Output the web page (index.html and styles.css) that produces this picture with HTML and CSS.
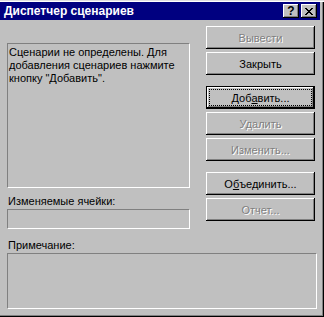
FILE: index.html
```html
<!DOCTYPE html>
<html>
<head>
    <title>Диспетчер сценариев</title>
    <link rel="stylesheet" href="styles.css">
</head>
<body>
    <div class="window">
        <div class="titlebar">
            <span class="title">Диспетчер сценариев</span>
            <div class="title-buttons">
                <span class="tbtn help">?</span>
                <span class="tbtn close">
                    <svg width="8" height="7" viewBox="0 0 8 7">
                        <path d="M0 0h2v1h1v1h2v-1h1v-1h2v1h-1v1h-1v1h-1v1h1v1h1v1h1v1h-2v-1h-1v-1h-2v1h-1v1h-2v-1h1v-1h1v-1h1v-1h-1v-1h-1v-1h-1z" fill="#000"/>
                    </svg>
                </span>
            </div>
        </div>

        <div class="content">
            <div class="top">
                <div class="left">
                    <div class="listbox">Сценарии не определены. Для добавления сценариев нажмите кнопку "Добавить".</div>
                    <div class="label">Изменяемые ячейки:</div>
                    <div class="field"></div>
                </div>
                <div class="buttons">
                    <div class="btn disabled">Вывести</div>
                    <div class="btn">Закрыть</div>
                    <div class="btn focused group"><span class="focus">Доб<u>а</u>вить...</span></div>
                    <div class="btn disabled">Удалить</div>
                    <div class="btn disabled">Изменить...</div>
                    <div class="btn group">О<u>б</u>ъединить...</div>
                    <div class="btn disabled">Отчет...</div>
                </div>
            </div>
            <div class="label note-label">Примечание:</div>
            <div class="field note"></div>
        </div>
    </div>
</body>
</html>
```

FILE: styles.css
```css
body {
    margin: 0;
    background: #c0c0c0;
    font-family: "Liberation Sans", Arial, sans-serif;
    font-size: 11px;
    color: #000;
}
.window {
    width: 324px;
    height: 317px;
    box-sizing: border-box;
    padding: 2px 4px 0 0;
    background: #c0c0c0;
    box-shadow: inset 0 1px #dfdfdf, inset 0 2px #fff, inset -1px -1px #000, inset -2px -2px #808080;
}
.titlebar {
    height: 18px;
    background: #000080;
    display: flex;
    align-items: center;
    justify-content: space-between;
    padding: 0 3px 0 4px;
}
.title {
    color: #fff;
    font-weight: bold;
    font-size: 12px;
}
.title-buttons {
    display: flex;
    gap: 2px;
}
.tbtn {
    width: 16px;
    height: 14px;
    box-sizing: border-box;
    background: #c0c0c0;
    box-shadow: inset -1px -1px #000, inset 1px 1px #fff, inset -2px -2px #808080;
    display: flex;
    align-items: center;
    justify-content: center;
    font-weight: bold;
    font-size: 12px;
    line-height: 14px;
}
.content {
    padding-left: 7px;
}
.top {
    display: flex;
}
.left {
    width: 183px;
    padding-top: 23px;
}
.listbox {
    height: 145px;
    box-sizing: border-box;
    border-top: 1px solid #808080;
    border-left: 1px solid #808080;
    border-right: 1px solid #fff;
    border-bottom: 1px solid #fff;
    padding: 2px 1px;
    line-height: 13px;
}
.label {
    margin-top: 7px;
    line-height: 13px;
    padding-left: 1px;
}
.field {
    height: 20px;
    margin-top: 1px;
    box-sizing: border-box;
    border-top: 1px solid #808080;
    border-left: 1px solid #808080;
    border-right: 1px solid #fff;
    border-bottom: 1px solid #fff;
}
.buttons {
    margin-left: 16px;
    padding-top: 6px;
    width: 109px;
    display: flex;
    flex-direction: column;
    gap: 3px;
}
.btn {
    height: 23px;
    box-sizing: border-box;
    display: flex;
    align-items: center;
    justify-content: center;
    box-shadow: inset -1px -1px #000, inset 1px 1px #fff, inset -2px -2px #808080;
}
.btn.group {
    margin-top: 8px;
}
.btn.disabled {
    color: #808080;
    text-shadow: 1px 1px #fff;
}
.btn.focused {
    border: 1px solid #000;
}
.focus {
    flex: 1;
    margin: 3px;
    align-self: stretch;
    display: flex;
    align-items: center;
    justify-content: center;
    outline: 1px dotted #000;
}
.note-label {
    margin-top: 10px;
}
.field.note {
    width: 310px;
    height: 56px;
}
```
